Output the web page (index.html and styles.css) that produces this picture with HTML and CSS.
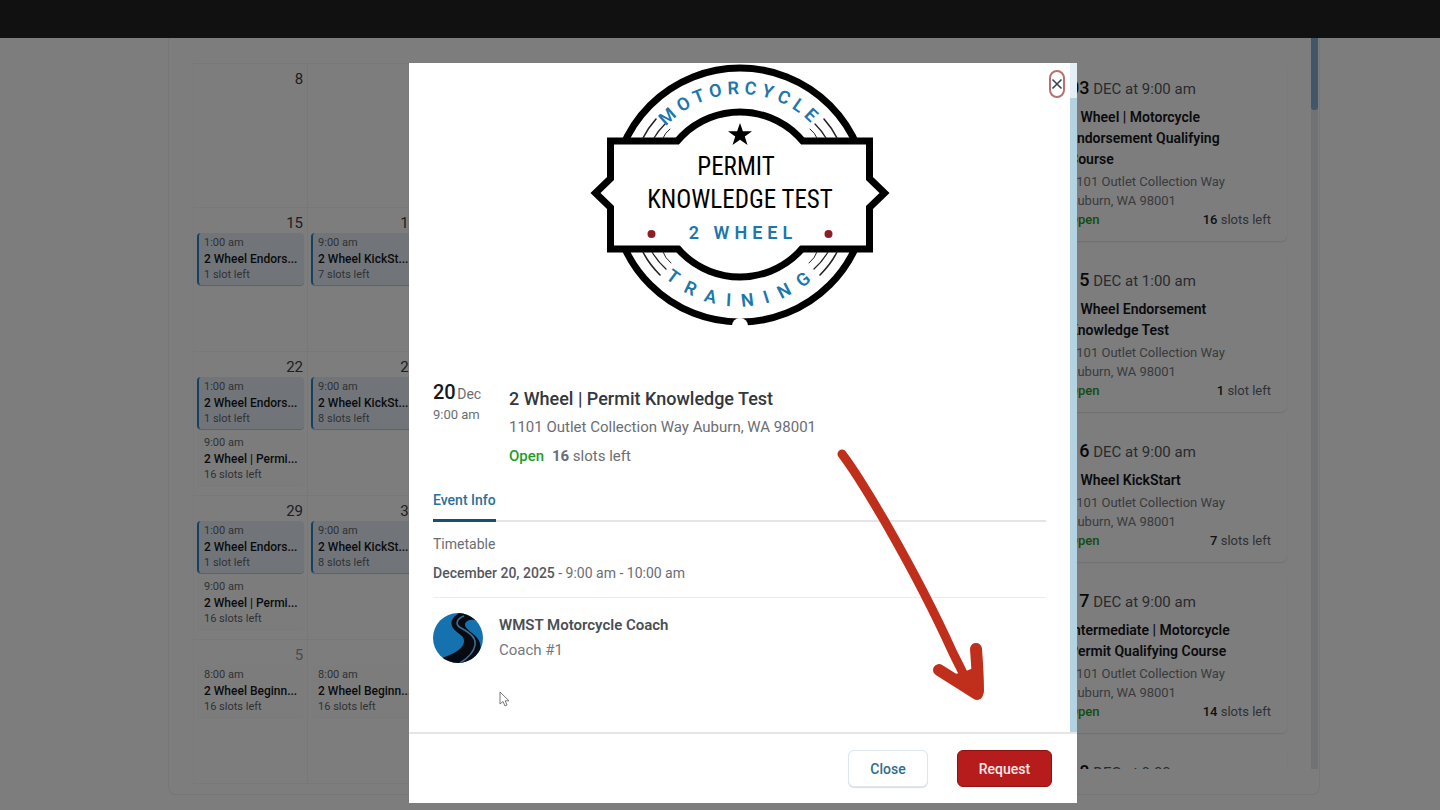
FILE: index.html
```html
<!DOCTYPE html>
<html lang="en">
<head>
<meta charset="utf-8">
<title>2 Wheel | Permit Knowledge Test</title>
<link rel="stylesheet" href="styles.css">
</head>
<body>
<header class="topbar"></header>
<div class="stage">
  <main class="schedule">
    <table class="calendar">
      <tbody>
        <tr>
          <td><div class="day">8</div></td>
          <td></td><td></td><td></td><td></td><td></td><td></td>
        </tr>
        <tr>
          <td>
            <div class="day">15</div>
            <a class="event event-active" href="#"><span>1:00 am</span><b>2 Wheel Endors...</b><span>1 slot left</span></a>
          </td>
          <td>
            <div class="day">16</div>
            <a class="event event-active" href="#"><span>9:00 am</span><b>2 Wheel KickSt...</b><span>7 slots left</span></a>
          </td>
          <td></td><td></td><td></td><td></td><td></td>
        </tr>
        <tr>
          <td>
            <div class="day">22</div>
            <a class="event event-active" href="#"><span>1:00 am</span><b>2 Wheel Endors...</b><span>1 slot left</span></a>
            <a class="event" href="#"><span>9:00 am</span><b>2 Wheel | Permi...</b><span>16 slots left</span></a>
          </td>
          <td>
            <div class="day">23</div>
            <a class="event event-active" href="#"><span>9:00 am</span><b>2 Wheel KickSt...</b><span>8 slots left</span></a>
          </td>
          <td></td><td></td><td></td><td></td><td></td>
        </tr>
        <tr>
          <td>
            <div class="day">29</div>
            <a class="event event-active" href="#"><span>1:00 am</span><b>2 Wheel Endors...</b><span>1 slot left</span></a>
            <a class="event" href="#"><span>9:00 am</span><b>2 Wheel | Permi...</b><span>16 slots left</span></a>
          </td>
          <td>
            <div class="day">30</div>
            <a class="event event-active" href="#"><span>9:00 am</span><b>2 Wheel KickSt...</b><span>8 slots left</span></a>
          </td>
          <td></td><td></td><td></td><td></td><td></td>
        </tr>
        <tr>
          <td>
            <div class="day day-next">5</div>
            <a class="event" href="#"><span>8:00 am</span><b>2 Wheel Beginn...</b><span>16 slots left</span></a>
          </td>
          <td>
            <div class="day day-next">6</div>
            <a class="event" href="#"><span>8:00 am</span><b>2 Wheel Beginn...</b><span>16 slots left</span></a>
          </td>
          <td></td><td></td><td></td><td></td><td></td>
        </tr>
      </tbody>
    </table>

    <aside class="agenda">
      <div class="agenda-list">
        <article class="card">
          <p class="card-date"><strong>03</strong> DEC at 9:00 am</p>
          <h3>2 Wheel | Motorcycle Endorsement Qualifying Course</h3>
          <p class="card-place">1101 Outlet Collection Way Auburn, WA 98001</p>
          <p class="card-foot"><span class="open">Open</span><span><b>16</b> slots left</span></p>
        </article>
        <article class="card">
          <p class="card-date"><strong>15</strong> DEC at 1:00 am</p>
          <h3>2 Wheel Endorsement Knowledge Test</h3>
          <p class="card-place">1101 Outlet Collection Way Auburn, WA 98001</p>
          <p class="card-foot"><span class="open">Open</span><span><b>1</b> slot left</span></p>
        </article>
        <article class="card">
          <p class="card-date"><strong>16</strong> DEC at 9:00 am</p>
          <h3>2 Wheel KickStart</h3>
          <p class="card-place">1101 Outlet Collection Way Auburn, WA 98001</p>
          <p class="card-foot"><span class="open">Open</span><span><b>7</b> slots left</span></p>
        </article>
        <article class="card">
          <p class="card-date"><strong>17</strong> DEC at 9:00 am</p>
          <h3>Intermediate | Motorcycle Permit Qualifying Course</h3>
          <p class="card-place">1101 Outlet Collection Way Auburn, WA 98001</p>
          <p class="card-foot"><span class="open">Open</span><span><b>14</b> slots left</span></p>
        </article>
        <article class="card">
          <p class="card-date"><strong>18</strong> DEC at 9:00</p>
        </article>
      </div>
      <div class="agenda-track"><div class="agenda-thumb"></div></div>
    </aside>
  </main>

  <div class="overlay">
    <section class="modal" role="dialog" aria-labelledby="event-title">
      <div class="modal-scroll">
        <div class="modal-body">
          <svg class="badge" viewBox="0 0 300 264" role="img" aria-label="Motorcycle training badge">
            <defs>
              <path id="arc-top" d="M49.500 131.500A100.500 100.500 0 0 1 250.500 131.500"/>
              <path id="arc-bottom" d="M38 131.500A112 112 0 0 0 262 131.500"/>
              <g id="streaks" fill="none" stroke="#222" stroke-linecap="round">
                <path stroke-width="1.600" d="M53 75Q58 65 66 56"/>
                <path stroke-width="1.300" d="M64 75Q68 68 75 61"/>
                <path stroke-width="1" d="M73 75Q75 70 80 66"/>
                <path stroke-width="1.600" d="M53 189Q59 201 70 212"/>
                <path stroke-width="1.300" d="M62 189Q68 199 76 206"/>
                <path stroke-width="1" d="M73 189Q75 195 81 200"/>
              </g>
            </defs>
            <circle cx="150" cy="132" r="127" fill="none" stroke="#000" stroke-width="7"/>
            <rect x="20" y="78" width="260" height="108" fill="#fff"/>
            <circle cx="150" cy="131.500" r="82.500" fill="#fff" stroke="#000" stroke-width="7"/>
            <path d="M22 81.500H278V182.500H22Z" fill="#fff"/>
            <path d="M89 78H20.500V115.500L5.500 130L20.500 144.500V186H89M211 78H279.500V115.500L294.500 130L279.500 144.500V186H211" fill="#fff" stroke="#000" stroke-width="7"/>
            <use href="#streaks"/>
            <use href="#streaks" transform="matrix(-1 0 0 1 300 0)"/>
            <circle cx="150" cy="263" r="8" fill="#fff"/>
            <path d="M150 60L152.900 68.300H162L154.800 73.500L157.500 82L150 76.800L142.500 82L145.200 73.500L138 68.300H147.100Z"/>
            <circle cx="61.500" cy="171" r="4" fill="#8f1d25"/>
            <circle cx="238.500" cy="171" r="4" fill="#8f1d25"/>
            <text class="badge-arc badge-arc-top"><textPath href="#arc-top" startOffset="50%">MOTORCYCLE</textPath></text>
            <text class="badge-arc badge-arc-bottom"><textPath href="#arc-bottom" startOffset="51%">TRAINING</textPath></text>
            <text class="badge-name" x="146" y="112">PERMIT</text>
            <text class="badge-name" x="150" y="145">KNOWLEDGE TEST</text>
            <text class="badge-arc badge-wheel" x="153" y="176">2 WHEEL</text>
          </svg>

          <div class="details">
            <div class="when">
              <p class="when-date"><strong>20</strong> Dec</p>
              <p class="when-time">9:00 am</p>
            </div>
            <div class="what">
              <h2 id="event-title">2 Wheel | Permit Knowledge Test</h2>
              <p>1101 Outlet Collection Way Auburn, WA 98001</p>
              <p><span class="open">Open</span> <span class="slots"><b>16</b> slots left</span></p>
            </div>
          </div>

          <div class="tabs" role="tablist"><button class="tab" role="tab" aria-selected="true">Event Info</button></div>

          <div class="timetable">
            <p>Timetable</p>
            <p><b>December 20, 2025</b> - 9:00 am - 10:00 am</p>
          </div>

          <div class="coach">
            <svg class="avatar" viewBox="0 0 50 50" aria-hidden="true">
              <clipPath id="disc"><circle cx="25" cy="25" r="25"/></clipPath>
              <g clip-path="url(#disc)">
                <rect width="50" height="50" fill="#1572ae"/>
                <path d="M26 0C18 5 17 10 20 15C24 21 32 22 31 29C30 37 18 42 6 46L12 50H38C48 44 50 34 45 26C41 20 31 16 32 11C33 7 38 6 43 7L38 0Z" fill="#080c12"/>
                <path d="M31 3C23 6 22 12 28 15C37 20 43 24 42 32C41 39 35 45 27 50" fill="none" stroke="#3f6d92" stroke-width="1.600"/>
              </g>
            </svg>
            <div>
              <p class="coach-name">WMST Motorcycle Coach</p>
              <p class="coach-role">Coach #1</p>
            </div>
          </div>
        </div>
        <div class="modal-track"><div class="modal-thumb"></div></div>
      </div>

      <footer class="modal-foot">
        <button class="btn btn-close">Close</button>
        <button class="btn btn-request">Request</button>
      </footer>

      <button class="dismiss" aria-label="Dismiss">
        <svg viewBox="0 0 12 12" aria-hidden="true"><path d="M1.500 1.500L10.500 10.500M10.500 1.500L1.500 10.500" stroke="#33454f" stroke-width="1.600"/></svg>
      </button>

      <svg class="cursor" viewBox="0 0 12 16" aria-hidden="true"><path d="M2 1V13L5 10.500L7 15L9 14L7.200 9.800H11Z" fill="#fff" stroke="#777" stroke-width="1"/></svg>

      <svg class="arrow" viewBox="0 0 154 260" aria-hidden="true">
        <g fill="none" stroke="#c02f1c" stroke-linecap="round" stroke-linejoin="round">
          <path stroke-width="9" d="M8 9C26 33 40 58 54 82C78 124 100 166 119 208L137 244"/>
          <path stroke-width="12" d="M105 225L143 249L144 246Q144 230 142 204"/>
        </g>
        <path d="M118 230L143 250L142 222L132 226Z" fill="#c02f1c"/>
      </svg>
    </section>
  </div>
</div>
</body>
</html>
```
FILE: styles.css
```css
* {
  box-sizing: border-box;
}

body {
  margin: 0;
  background: #fff;
  color: #3c4043;
  font-family: Roboto, "Liberation Sans", sans-serif;
  font-size: 14px;
  overflow: hidden;
}

p,
h2,
h3 {
  margin: 0;
}

a {
  color: inherit;
  text-decoration: none;
}

button {
  font-family: inherit;
  cursor: pointer;
}

.topbar {
  height: 38px;
  background: #111;
}

.stage {
  position: relative;
  min-height: calc(100vh - 38px);
}

.schedule {
  display: flex;
  justify-content: space-between;
  margin-left: 168px;
  margin-right: 120px;
  padding: 0 0 10px 24px;
  border: 1px solid #f0f0f0;
  border-top: 0;
  border-radius: 0 0 8px 8px;
}

/* Month grid */

.calendar {
  width: 71%;
  align-self: flex-start;
  margin-top: 25px;
  border-collapse: collapse;
  table-layout: fixed;
}

.calendar td {
  height: 144px;
  padding: 5px 3px 0;
  border: 1px solid #f4f4f4;
  border-left-color: #f8f8f8;
  vertical-align: top;
}

.day {
  padding-right: 1px;
  font-size: 15px;
  line-height: 20px;
  text-align: right;
}

.day-next {
  color: #999;
}

.event {
  display: flex;
  flex-direction: column;
  height: 52px;
  margin-bottom: 4px;
  padding: 2px 0 0 5px;
  border-left: 2px solid transparent;
  border-radius: 4px;
  background: #fdfdfd;
  box-shadow: 0 1px 1px #f6f6f6;
  color: #62676c;
  font-size: 11px;
  line-height: 16px;
  white-space: nowrap;
  overflow: hidden;
}

.event b {
  color: #15181c;
  font-size: 12px;
  font-weight: 500;
}

.event-active {
  border-left-color: #2a86c8;
  background: #e7eff7;
  box-shadow: 0 1px 1px #b4c8d8;
}

/* Upcoming list */

.agenda {
  display: flex;
  gap: 24px;
  height: 731px;
  padding-right: 1px;
  overflow: hidden;
}

.agenda-list {
  display: flex;
  flex-direction: column;
  gap: 15px;
  width: 233px;
  padding-top: 26px;
}

.agenda-track {
  width: 7px;
  background: #e2eaee;
}

.agenda-thumb {
  height: 72px;
  border-radius: 0 0 3px 3px;
  background: #86b2d6;
}

.card {
  flex: none;
  padding: 14px 16px 12px 15px;
  border-radius: 6px;
  box-shadow: 0 1px 2px #e2e2e2;
}

.card-date {
  color: #55595e;
  font-size: 15px;
  line-height: 20px;
}

.card-date strong {
  color: #101214;
  font-size: 18px;
  font-weight: 500;
}

.card h3 {
  margin: 8px 0 2px;
  padding-right: 12px;
  color: #15181c;
  font-size: 14px;
  font-weight: 600;
  line-height: 21px;
}

.card-place {
  color: #74797e;
  font-size: 13px;
  line-height: 19px;
}

.card-foot {
  display: flex;
  justify-content: space-between;
  color: #62676c;
  font-size: 13px;
  line-height: 19px;
}

.card-foot b {
  color: #202327;
  font-weight: 500;
}

.open {
  color: #1f9d2b;
  font-weight: 500;
}

/* Event dialog */

.overlay {
  position: absolute;
  inset: 0;
  display: flex;
  justify-content: center;
  align-items: flex-start;
  padding: 25px 0 0 46px;
  background: rgba(0, 0, 0, 0.51);
}

.modal {
  position: relative;
  width: 100%;
  max-width: 668px;
  background: #fff;
}

.modal-scroll {
  display: flex;
}

.modal-body {
  flex: 1;
  padding: 0 24px 69px;
}

.modal-track {
  width: 7px;
  padding-top: 35px;
  background: #e3eff4;
}

.modal-thumb {
  height: 100%;
  background: #b3d3e2;
}

.badge {
  display: block;
  width: 300px;
  margin: 0 auto 57px;
}

.badge-name {
  font-family: "Roboto Condensed", "Liberation Sans Narrow", Roboto, sans-serif;
  font-size: 25px;
  text-anchor: middle;
}

.badge-arc {
  fill: #1c77ab;
  font-size: 18px;
  font-weight: 600;
  text-anchor: middle;
}

.badge-arc-top {
  letter-spacing: 5px;
}

.badge-arc-bottom {
  letter-spacing: 11px;
}

.badge-wheel {
  letter-spacing: 5px;
}

.details {
  display: flex;
  color: #6a6e73;
}

.when {
  width: 76px;
}

.when-date {
  line-height: 16px;
}

.when-date strong {
  color: #15181c;
  font-size: 20px;
  font-weight: 500;
  margin-right: -2px;
}

.when-time {
  font-size: 13px;
  line-height: 26px;
}

.what {
  font-size: 15px;
  line-height: 29px;
}

.what h2 {
  color: #33383d;
  font-size: 18px;
  font-weight: 500;
}

.slots {
  margin-left: 4px;
}

.tabs {
  margin-top: 19px;
  height: 32px;
  border-bottom: 2px solid #e4e5e6;
}

.tab {
  height: 32px;
  padding: 0 0 9px;
  border: 0;
  border-bottom: 3px solid #17506f;
  background: none;
  color: #2a7199;
  font-size: 14px;
  font-weight: 500;
  line-height: 20px;
}

.timetable {
  padding: 8px 0 9px;
  border-bottom: 1px solid #ececec;
  color: #6a6e73;
  line-height: 29px;
}

.timetable b {
  color: #54585d;
  font-weight: 500;
}

.coach {
  display: flex;
  gap: 16px;
  padding-top: 15px;
  line-height: 25px;
}

.avatar {
  width: 50px;
  height: 50px;
}

.coach-name {
  color: #4a4f54;
  font-size: 15px;
  font-weight: 600;
}

.coach-role {
  color: #74797e;
  font-size: 15px;
}

.modal-foot {
  display: flex;
  justify-content: flex-end;
  gap: 29px;
  padding: 16px 25px;
  border-top: 2px solid #e4e6e7;
}

.btn {
  height: 37px;
  border-radius: 6px;
  font-size: 14px;
  font-weight: 500;
}

.btn-close {
  width: 80px;
  border: 1px solid #dde6ea;
  background: #fff;
  box-shadow: 0 1px 1px #d5dee2;
  color: #2f6d8c;
}

.btn-request {
  width: 95px;
  border: 1px solid #8e1214;
  background: #b71c1c;
  color: #fbe9e9;
}

.dismiss {
  position: absolute;
  top: 7px;
  right: 12px;
  display: grid;
  place-items: center;
  width: 16px;
  height: 28px;
  padding: 0;
  border: 2px solid #b87070;
  border-radius: 8px;
  background: #fff;
}

.dismiss svg {
  width: 12px;
  height: 12px;
}

.cursor {
  position: absolute;
  left: 89px;
  top: 628px;
  width: 12px;
  height: 16px;
}

.arrow {
  position: absolute;
  left: 425px;
  top: 382px;
  width: 154px;
  height: 260px;
}
```
